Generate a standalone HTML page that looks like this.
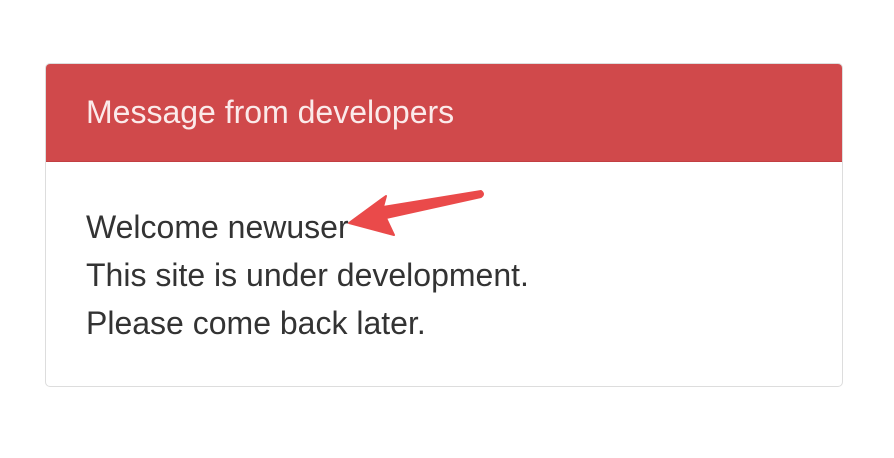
<!DOCTYPE html>
<html><head><style>
html,body{margin:0;padding:0;background:#fff;width:894px;height:458px;overflow:hidden;font-family:"Liberation Sans",sans-serif;}
.panel{position:absolute;left:45px;top:63px;width:796px;height:322px;border:1px solid #ddd;border-radius:5px;overflow:hidden;}
.head{background:#d0494b;height:97px;border-bottom:1px solid #c23f42;color:#fbeaea;font-size:32px;line-height:97px;padding-left:40px;}
.body{padding:41px 40px 0;color:#333;font-size:32px;line-height:48px;}
</style></head><body>
<div class="panel">
<div class="head">Message from developers</div>
<div class="body">Welcome newuser<br>This site is under development.<br>Please come back later.</div>
</div>
<svg style="position:absolute;left:0;top:0" width="894" height="458">
<path d="M349,223 L386,196 L383,207 L481,191 Q485,194 481,197 L386,218 L394,235 Z" fill="#ea4a4a" stroke="#ea4a4a" stroke-width="2" stroke-linejoin="round"/>
</svg>
</body></html>
